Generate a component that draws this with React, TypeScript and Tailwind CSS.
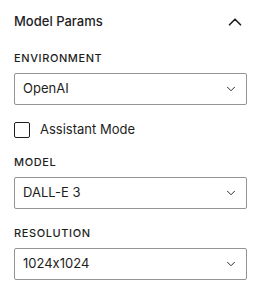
import { ChevronDown, ChevronUp } from 'lucide-react';

function Field({ label, value }: { label: string; value: string }) {
  return (
    <div className="flex flex-col">
      <div className="mb-[7px] h-4 text-[11px] leading-4 font-medium tracking-[0.6px] text-[#1e1e1e] uppercase">
        {label}
      </div>
      <div className="flex h-8 items-center justify-between rounded-[2px] border border-[#949494] pr-[8px] pl-[8px] text-[13px] text-[#1e1e1e]">
        <span>{value}</span>
        <ChevronDown className="h-[14px] w-[14px] text-[#1e1e1e]" strokeWidth={1.6} />
      </div>
    </div>
  );
}

export default function App() {
  return (
    <div className="h-[302px] w-[259px] bg-white font-['Inter',sans-serif] text-[#1e1e1e] [font-feature-settings:'calt'_0]">
      {/* panel header */}
      <div className="flex h-[44px] items-center justify-between pr-[13px] pl-[14px]">
        <span className="text-[13px] font-medium">Model Params</span>
        <ChevronUp className="h-[22px] w-[22px]" strokeWidth={1.8} />
      </div>

      {/* panel body */}
      <div className="flex flex-col pt-[6px] pr-[12px] pl-[14px]">
        <Field label="Environment" value="OpenAI" />

        <label className="mt-[17px] flex h-4 items-center gap-[10px] text-[13px]">
          <span className="h-4 w-4 rounded-[2px] border border-[#1e1e1e] bg-white" />
          Assistant Mode
        </label>

        <div className="mt-4">
          <Field label="Model" value="DALL-E 3" />
        </div>
        <div className="mt-4">
          <Field label="Resolution" value="1024x1024" />
        </div>
      </div>
    </div>
  );
}
